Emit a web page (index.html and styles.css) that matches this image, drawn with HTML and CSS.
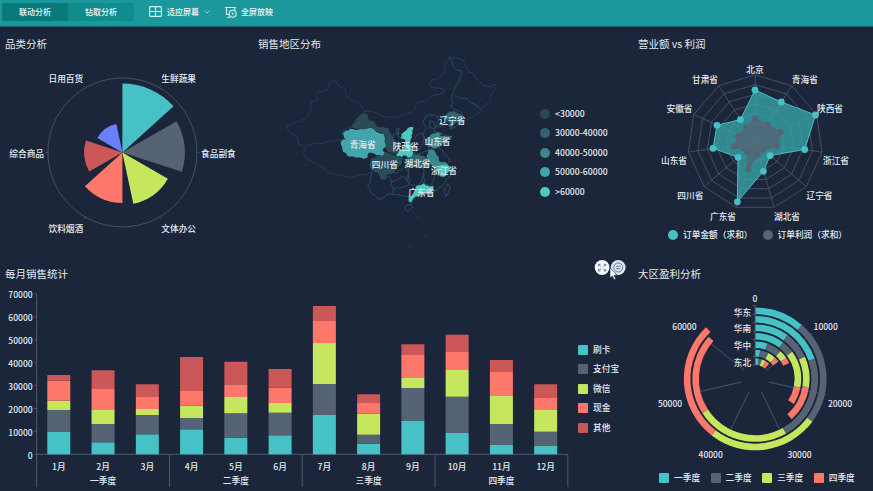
FILE: index.html
```html
<!DOCTYPE html>
<html lang="zh-CN">
<head>
<meta charset="utf-8">
<title>销售分析</title>
<link rel="stylesheet" href="styles.css">
</head>
<body>
<header class="toolbar">
  <nav class="tabs">
    <button class="tab tab-active">联动分析</button>
    <button class="tab">钻取分析</button>
  </nav>
  <button class="tool tool-fit">
    <svg class="icon" width="13" height="11" viewBox="0 0 13 11"><rect x=".6" y=".6" width="11.8" height="9.8" rx=".8"/><path d="M.6 5.5H12.4M6.5 .6V10.4"/></svg>
    <span>适应屏幕</span>
    <svg class="icon chevron" width="6" height="4" viewBox="0 0 6 4"><path d="M.5 .7L3 3L5.5 .7"/></svg>
  </button>
  <button class="tool tool-play">
    <svg class="icon" width="12" height="12" viewBox="0 0 12 12"><path d="M0 1.5H11M9.8 1.5V4M1.5 1.5V8.5H4M2 11.2H5"/><circle cx="7.7" cy="7.7" r="3.5"/><path class="solid" d="M6.9 6.1L9.3 7.7L6.9 9.3Z"/></svg>
    <span>全屏放映</span>
  </button>
</header>
<main class="board">
  <section class="row row-top">
    <article class="panel panel-category">
      <h2>品类分析</h2>
      <svg id="rose" class="chart" width="250" height="198" viewBox="0 54 250 198"></svg>
    </article>
    <article class="panel panel-region">
      <h2>销售地区分布</h2>
      <div class="split">
        <svg id="map" class="chart" width="289" height="198" viewBox="251 54 289 198"></svg>
        <ul class="legend legend-column">
          <li><i class="dot lv1"></i>&lt;30000</li>
          <li><i class="dot lv2"></i>30000-40000</li>
          <li><i class="dot lv3"></i>40000-50000</li>
          <li><i class="dot lv4"></i>50000-60000</li>
          <li><i class="dot lv5"></i>&gt;60000</li>
        </ul>
      </div>
    </article>
    <article class="panel panel-radar">
      <h2>营业额 vs 利润</h2>
      <svg id="radar" class="chart" width="243" height="173" viewBox="629 54 243 173"></svg>
      <ul class="legend legend-radar">
        <li><i class="dot teal"></i>订单金额（求和）</li>
        <li><i class="dot slate"></i>订单利润（求和）</li>
      </ul>
    </article>
  </section>
  <section class="row row-bottom">
    <article class="panel panel-month">
      <h2>每月销售统计</h2>
      <div class="split">
        <svg id="bars" class="chart" width="573" height="207" viewBox="0 283 573 207"></svg>
        <ul class="legend legend-column">
          <li><i class="box teal"></i>刷卡</li>
          <li><i class="box slate"></i>支付宝</li>
          <li><i class="box lime"></i>微信</li>
          <li><i class="box coral"></i>现金</li>
          <li><i class="box red"></i>其他</li>
        </ul>
      </div>
      <div class="actions">
        <svg width="32" height="22" viewBox="594 259 32 22">
          <circle class="action" cx="602.1" cy="267.5" r="7.4"/>
          <circle class="action action-hover" cx="618.2" cy="267.5" r="7.4"/>
          <path class="glyph" d="M598.5 266V264.3H600.4M603.8 264.3H605.7V266M605.7 269V270.9H603.8M600.4 270.9H598.5V269M598.7 264.5L601 266.6M605.5 264.5L603.2 266.6M605.5 270.7L603.2 268.6M598.7 270.7L601 268.6"/>
          <circle class="glyph" cx="618.2" cy="267.5" r="4.5"/>
          <path class="glyph" d="M616 266.3H620.5M616 268.7H620.5"/>
          <path class="cursor" d="M610 267.6V278L612.4 275.9L614 279.6L615.7 278.8L614.1 275.3H617.2Z"/>
        </svg>
      </div>
    </article>
    <article class="panel panel-profit">
      <h2>大区盈利分析</h2>
      <svg id="polar" class="chart" width="243" height="187" viewBox="629 283 243 187"></svg>
      <ul class="legend legend-profit">
        <li><i class="box teal"></i>一季度</li>
        <li><i class="box slate"></i>二季度</li>
        <li><i class="box lime"></i>三季度</li>
        <li><i class="box coral"></i>四季度</li>
      </ul>
    </article>
  </section>
</main>
<script src="charts.js"></script>
</body>
</html>
```
FILE: styles.css
```css
* { box-sizing: border-box; }

body {
  margin: 0;
  width: 873px;
  height: 491px;
  overflow: hidden;
  display: flex;
  flex-direction: column;
  background: #1b263b;
  color: #e4eaf0;
  font-family: "Noto Sans CJK SC", sans-serif;
  font-size: 8.7px;
}

.toolbar {
  display: flex;
  align-items: center;
  height: 27px;
  flex: none;
  padding: 0 0 3px 2px;
  background: #1b989b;
  border-bottom: 1px solid #1c5b68;
}

.tabs { display: flex; width: 132px; height: 18px; border-radius: 2px; overflow: hidden; background: #128b8c; }

.tab, .tool {
  border: 0;
  padding: 0;
  margin: 0;
  background: none;
  color: #eefafa;
  font: 500 8px/12px "Noto Sans CJK SC", sans-serif;
}

.tab { flex: 1; }
.tab-active { background: #087a7b; }
.tool { display: flex; align-items: center; }
.tool-fit { margin-left: 15px; gap: 5px; }
.tool-play { margin-left: 15px; gap: 4px; }

.icon { fill: none; stroke: #d9f4f4; stroke-width: 1.1; }
.icon .solid { fill: #d9f4f4; stroke: none; }
.chevron { stroke-width: .8; opacity: .8; }

.board { display: flex; flex-direction: column; flex: 1; }
.row { display: flex; }
.row-top { height: 228px; }
.row-bottom { height: 236px; }

.panel {
  position: relative;
  border-right: 1px solid #182338;
  border-bottom: 1px solid #18243a;
}
.panel-category { width: 251px; }
.panel-region { width: 378px; }
.panel-radar, .panel-profit { width: 244px; border-right: 0; }
.panel-month { width: 629px; }

.panel h2 {
  margin: 0;
  height: 27px;
  padding: 10px 0 0 5px;
  font-size: 10.5px;
  line-height: 14px;
  font-weight: 400;
}
.panel-region h2 { padding-left: 7px; }
.row-bottom h2 { height: 28px; padding-top: 12px; }
.panel-radar h2, .panel-profit h2 { padding-left: 9px; }

.chart { display: block; flex: none; overflow: visible; }
.split { display: flex; }

.legend { display: flex; margin: 0; padding: 0; list-style: none; font-weight: 500; }
.legend li { display: flex; align-items: center; gap: 5px; height: 10px; line-height: 10px; white-space: nowrap; }
.legend-column { flex-direction: column; gap: 9.4px; }
.panel-region .legend { padding-top: 55px; }
.panel-month .legend { padding: 62px 0 0 5px; }
.legend-radar { padding: 3px 0 0 39px; gap: 10px; }
.legend-profit { padding: 3px 0 0 30px; gap: 10.5px; }

.dot, .box { width: 10px; height: 10px; flex: none; }
.dot { border-radius: 50%; }
.box { border-radius: 1px; }

.teal { background: #46c1c6; }
.slate { background: #566375; }
.lime { background: #c6e75d; }
.coral { background: #fe776b; }
.red { background: #cc5759; }
.lv1 { background: #2a4855; }
.lv2 { background: #326372; }
.lv3 { background: #3b858c; }
.lv4 { background: #43a5aa; }
.lv5 { background: #4dcabf; }

.chart text { fill: #e4eaf0; font-size: 8.7px; font-weight: 500; dominant-baseline: central; }
.chart .num { font-size: 8.5px; }

.f-teal { fill: #46c1c6; }
.f-slate { fill: #566375; }
.f-lime { fill: #c6e75d; }
.f-coral { fill: #fe776b; }
.f-red { fill: #cc5759; }
.f-blue { fill: #6880fd; }

.axis { fill: none; stroke: #536073; stroke-width: .9; }
.ring { fill: none; stroke: #4f596d; stroke-width: .8; }
.spoke { stroke: #5e687b; stroke-width: .7; }
.area-sales { fill: #37a5a7; fill-opacity: .78; stroke: #46c1c6; stroke-width: 1; }
.area-profit { fill: #566375; fill-opacity: .75; stroke: #566375; stroke-width: 1; }

.land { fill: none; stroke: #2a4c5c; stroke-width: 2; stroke-linejoin: round; }
.land-east { fill: none; stroke: #2c6572; stroke-width: 2; stroke-linejoin: round; }
.p1 { fill: #2a4b58; }
.p2 { fill: #316470; }
.p3 { fill: #3b858c; }
.p4 { fill: #43a5aa; }
.p5 { fill: #4dcabf; }

.actions { position: absolute; left: 594px; top: 4px; line-height: 0; }
.action { fill: #f5f9fb; }
.action-hover { fill: #dae6f2; }
.glyph { fill: none; stroke: #5f7590; stroke-width: .9; }
.cursor { fill: #fff; stroke: #26334a; stroke-width: .7; }
```
FILE: charts.js
```js
const NS = "http://www.w3.org/2000/svg";

function add(parent, tag, attrs, text) {
  const el = document.createElementNS(NS, tag);
  for (const key in attrs) el.setAttribute(key, attrs[key]);
  if (text !== undefined) el.textContent = text;
  parent.appendChild(el);
  return el;
}

function label(parent, text, x, y, anchor = "middle", cls = "") {
  add(parent, "text", { x, y, "text-anchor": anchor, class: cls }, text);
}

// Angles run clockwise in degrees from twelve o'clock.
function polar(cx, cy, r, deg) {
  const a = (deg * Math.PI) / 180;
  return [+(cx + r * Math.sin(a)).toFixed(2), +(cy - r * Math.cos(a)).toFixed(2)];
}

function sector(cx, cy, r0, r1, from, to) {
  const big = to - from > 180 ? 1 : 0;
  return `M${polar(cx, cy, r0, from)}L${polar(cx, cy, r1, from)}A${r1} ${r1} 0 ${big} 1 ${polar(cx, cy, r1, to)}` +
    `L${polar(cx, cy, r0, to)}A${r0} ${r0} 0 ${big} 0 ${polar(cx, cy, r0, from)}Z`;
}

const palette = ["teal", "slate", "lime", "coral", "red", "blue"];

function drawRose() {
  const svg = document.getElementById("rose");
  const cx = 122.4, cy = 152.4;
  add(svg, "circle", { cx, cy, r: 74.5, class: "ring" });
  for (let i = 0; i < 6; i++) {
    const [x1, y1] = polar(cx, cy, 74.5, 30 + i * 60);
    const [x2, y2] = polar(cx, cy, 77, 30 + i * 60);
    add(svg, "line", { x1, y1, x2, y2, class: "ring" });
  }
  [68.8, 62.5, 52.5, 50.5, 38.3, 29].forEach((r, i) =>
    add(svg, "path", { d: sector(cx, cy, 0.01, r, i * 60, i * 60 + 48), class: "f-" + palette[i] }));
  label(svg, "生鲜蔬果", 161.3, 78.8, "start");
  label(svg, "食品副食", 201, 153.3, "start");
  label(svg, "文体办公", 161.3, 228, "start");
  label(svg, "饮料烟酒", 83.2, 228, "end");
  label(svg, "综合商品", 44, 153.3, "end");
  label(svg, "日用百货", 83.2, 78.8, "end");
}

function drawRadar() {
  const svg = document.getElementById("radar");
  const cx = 755.2, cy = 142.5, R = 67.5, n = 11;
  for (let k = 1; k <= 7; k++) {
    const pts = [];
    for (let i = 0; i < n; i++) pts.push(polar(cx, cy, (R * k) / 7, (i * 360) / n));
    add(svg, "polygon", { points: pts.join(" "), class: "ring" });
  }
  for (let i = 0; i < n; i++) {
    const [x2, y2] = polar(cx, cy, R, (i * 360) / n);
    add(svg, "line", { x1: cx, y1: cy, x2, y2, class: "ring" });
  }
  const sales = [[755, 90], [781.3, 102], [815.5, 115], [804.7, 149.5], [770.2, 155.6], [763.4, 171.3],
    [737.4, 201.8], [738, 157.3], [713, 148.3], [717, 125.3], [740.4, 119.6]];
  const profit = [[755.3, 118.5], [767, 124.5], [780.5, 132], [777, 146], [762, 150], [757.5, 155],
    [748.5, 169], [747, 152], [734.5, 146.5], [738, 136], [746, 127.5]];
  add(svg, "polygon", { points: sales.join(" "), class: "area-sales" });
  sales.forEach(([x, y]) => add(svg, "circle", { cx: x, cy: y, r: 3.4, class: "f-teal" }));
  add(svg, "polygon", { points: profit.join(" "), class: "area-profit" });
  profit.forEach(([x, y]) => add(svg, "circle", { cx: x, cy: y, r: 3, class: "f-slate" }));
  [["北京", 755, 69], ["青海省", 804.8, 79.5], ["陕西省", 830, 108.5], ["浙江省", 836, 160], ["辽宁省", 819.5, 195.5],
    ["湖北省", 787, 216], ["广东省", 723, 216], ["四川省", 690.3, 195.5], ["山东省", 674, 160], ["安徽省", 679.5, 108.5],
    ["甘肃省", 705, 79.5]].forEach(([t, x, y]) => label(svg, t, x, y));
}

function drawBars() {
  const svg = document.getElementById("bars");
  const x0 = 36.7, base = 454.3, step = 44.26;
  const tops = [
    [432, 410, 400.7, 380.7, 375], [442.3, 424, 410, 389, 370.3], [434.3, 415, 409, 397, 384.3],
    [429.3, 418, 405.7, 390.3, 357], [437.7, 413.3, 397, 384.3, 361.7], [435.3, 412.7, 403, 387.7, 369],
    [415, 384, 343, 321, 306], [443.7, 434.7, 413.7, 403, 394.3], [421, 388, 377.3, 355, 344.3],
    [433, 396.7, 370, 352, 334.7], [445, 424, 395.3, 372, 360], [446, 431.7, 410, 397.3, 384.3]];
  add(svg, "path", { d: `M${x0} 294V487M${x0} ${base}H${x0 + step * 12}`, class: "axis" });
  for (let v = 0; v <= 7; v++) {
    const y = base - v * 22.9;
    add(svg, "path", { d: `M${x0 - 2.5} ${y}H${x0}`, class: "axis" });
    label(svg, String(v * 10000), 32.6, y + 0.4, "end", "num");
  }
  tops.forEach((col, i) => {
    let bottom = base;
    col.forEach((y, k) => {
      add(svg, "rect", { x: x0 + step * i + 10.6, y, width: 23, height: bottom - y, class: "f-" + palette[k] });
      bottom = y;
    });
    label(svg, i + 1 + "月", x0 + step * (i + 0.5), 466);
  });
  ["一季度", "二季度", "三季度", "四季度"].forEach((t, i) => {
    label(svg, t, x0 + step * (i * 3 + 1.5), 480);
    add(svg, "path", { d: `M${x0 + step * (i + 1) * 3} ${base}V487`, class: "axis" });
  });
}

function drawPolar() {
  const svg = document.getElementById("polar");
  const cx = 755.2, cy = 378.9;
  for (let i = 1; i < 7; i++) {
    const [x1, y1] = polar(cx, cy, 14, (i * 360) / 7);
    const [x2, y2] = polar(cx, cy, i === 1 || i === 2 ? 73 : 56, (i * 360) / 7);
    add(svg, "line", { x1, y1, x2, y2, class: "spoke" });
  }
  const rings = [[40.9, 126.8, 217.6, 316.4], [71.2, 150.7, 237, 312.2], [36.5, 66, 98.8, 137.8],
    [37.5, 53.7, 100.9, 123], [19.2, 42.5, 56, 65], [10, 27, 43, 53], [10, 19, 30, 43]];
  rings.forEach((ends, i) => {
    const r1 = 71.4 - i * 8.47;
    let from = 0;
    ends.forEach((to, k) => {
      add(svg, "path", { d: sector(cx, cy, r1 - 6.6, r1, from, to), class: "f-" + palette[k] });
      from = to;
    });
  });
  add(svg, "path", { d: "M755.2 305V365", class: "axis" });
  for (let i = 0; i <= 7; i++) add(svg, "path", { d: `M752.7 ${305.7 + i * 8.47}H755.2`, class: "axis" });
  [["华东", 312.3], ["华南", 328.8], ["华中", 345.8], ["东北", 362.8]].forEach(([t, y]) => label(svg, t, 751.2, y, "end"));
  [["0", 755, 298.4], ["10000", 825.7, 326.4], ["20000", 840, 402.9], ["30000", 799.5, 453.6], ["40000", 710.7, 453.6],
    ["50000", 670, 402.9], ["60000", 684.4, 326.4]].forEach(([t, x, y]) => label(svg, t, x, y, "middle", "num"));
}

// Midpoint displacement with a fixed sequence gives borders a natural edge.
function rough(points, closed) {
  const p = points.trim().split(/\s+/).map(s => s.split(",").map(Number));
  if (closed) p.push(p[0]);
  let d = "M" + p[0];
  for (let i = 1; i < p.length; i++) {
    const [ax, ay] = p[i - 1], [bx, by] = p[i];
    const len = Math.hypot(bx - ax, by - ay);
    const parts = Math.max(1, Math.round(len / 7));
    for (let k = 1; k < parts; k++) {
      const t = k / parts;
      const x = ax + (bx - ax) * t, y = ay + (by - ay) * t;
      const off = 2.2 * Math.sin(x * 1.7 + y * 2.3);
      d += `L${(x - ((by - ay) / len) * off).toFixed(1)},${(y + ((bx - ax) / len) * off).toFixed(1)}`;
    }
    d += `L${bx},${by}`;
  }
  return d + (closed ? "Z" : "");
}

function drawMap() {
  const svg = document.getElementById("map");
  const g = add(svg, "g", { transform: "translate(250 30) scale(.33333)" });
  const fills = [
    ["p1", "305,290 318,268 340,250 352,252 356,270 374,276 385,292 402,290 418,298 426,318 436,330 430,345 445,358 436,372 420,368 408,358 405,325 390,305 370,300 340,300 320,296"],
    ["p1", "362,388 385,378 400,368 418,370 440,378 458,384 456,400 440,412 434,430 415,432 404,446 394,448 385,430 365,420 358,404"],
    ["p2", "472,380 500,374 522,378 536,388 542,402 534,412 505,414 480,410 462,400"],
    ["p2", "572,262 592,250 612,244 630,252 638,262 618,278 604,292 596,290 600,278 588,270"],
    ["p3", "534,362 546,358 556,366 566,380 568,394 590,398 586,410 566,414 548,408 538,394 530,384"],
    ["p3", "526,330 545,312 562,306 574,310 570,318 606,318 602,326 584,334 570,350 552,356 536,350"],
    ["p4", "276,310 300,296 322,300 345,298 358,294 374,300 386,308 402,312 404,330 408,345 398,358 404,368 398,378 380,376 366,368 356,368 352,384 342,388 325,382 300,380 280,366 273,345 274,332 288,328"],
    ["p5", "470,300 478,292 490,290 488,310 482,328 484,350 490,370 480,382 466,376 454,382 438,374 446,362 462,358 468,345 466,330 452,326 454,312"],
    ["p5", "562,414 576,404 590,402 600,412 598,424 588,438 572,440 564,428"],
    ["p5", "502,466 520,460 534,468 552,468 548,484 530,492 508,496 492,504 484,518 476,514 478,500 490,490 496,478"]
  ];
  fills.forEach(([cls, pts]) => add(g, "path", { d: rough(pts, true), class: cls }));
  const west = [
    "597,82 585,105 580,130 565,145 545,150 538,165 560,175 580,178 580,188 555,195 530,212 500,220 497,235 480,248 460,258 430,262 395,258 375,248 342,245 330,220 305,210 288,195 282,175 265,165 250,152 238,160 228,182 205,185 200,210 180,215 183,240 175,258 150,275 125,282 110,290 120,308 140,320 145,340 160,350 165,360 160,372 168,385 185,395 210,405 232,425 255,432 280,437 300,443 325,436 345,432 362,426",
    "165,350 185,342 210,340 235,333 255,335 274,330",
    "342,245 338,258 318,268 306,290 280,300 276,320",
    "597,82 620,84 642,94 653,120 672,135 686,150 700,168 718,170 735,163 733,180 722,195 722,215 708,222 698,235 694,246 680,250 665,262 648,270 636,276"
  ];
  const east = [
    "597,82 608,100 618,118 634,122 630,150 618,165 612,185 606,200 608,215",
    "612,196 628,206 648,204 662,218 682,228 694,238",
    "608,215 602,228 618,240 636,250 640,270",
    "636,276 618,290 602,298 606,284 596,274 582,284 570,290 558,288 552,304 572,310 590,318 606,320 590,332 572,346 566,354 580,364 592,380 600,396 590,402 604,412 606,424 600,438 588,448 582,462 566,474 552,486 530,492 508,496 492,504 484,518 476,514 478,500 460,498 445,492 425,492 408,495 393,508 378,500 362,488 353,468 362,450 364,426",
    "522,330 518,310 528,296 520,278 526,260 542,254 560,256 566,270 560,282",
    "540,272 552,276 556,288 548,298 536,290 540,272",
    "440,352 428,330 430,314 444,312 440,296 448,296 446,320 456,328",
    "490,370 508,360 520,340 522,318 508,310 490,330",
    "490,370 510,372 530,364 538,350",
    "388,430 402,448 418,440 424,456 446,446 462,438 470,452 478,462 456,472 430,476 424,456",
    "434,430 452,420 470,410 474,438 470,452",
    "474,412 478,462 500,468 516,456 522,436 520,414",
    "522,436 524,462 546,468 550,446 560,430 552,412",
    "560,430 580,442",
    "430,476 428,490",
    "592,462 600,468 594,490 587,500 582,484 592,462",
    "466,528 482,524 488,532 478,542 466,540 466,528"
  ];
  west.forEach(p => add(g, "path", { d: rough(p), class: "land" }));
  east.forEach(p => add(g, "path", { d: rough(p), class: "land-east" }));
  add(g, "path", { d: "M501 558L505 566M522 617L530 616M474 652L483 648M521 652L529 646M498 600L500 602", class: "land" });
  [["青海省", 362.7, 144.5], ["陕西省", 405.7, 146.3], ["四川省", 384.8, 164.6], ["湖北省", 417.5, 163.6],
    ["山东省", 437.5, 141.8], ["浙江省", 444, 170.7], ["广东省", 421.3, 192.6], ["辽宁省", 452.3, 120]]
    .forEach(([t, x, y]) => label(svg, t, x, y));
}

drawRose();
drawMap();
drawRadar();
drawBars();
drawPolar();
```
